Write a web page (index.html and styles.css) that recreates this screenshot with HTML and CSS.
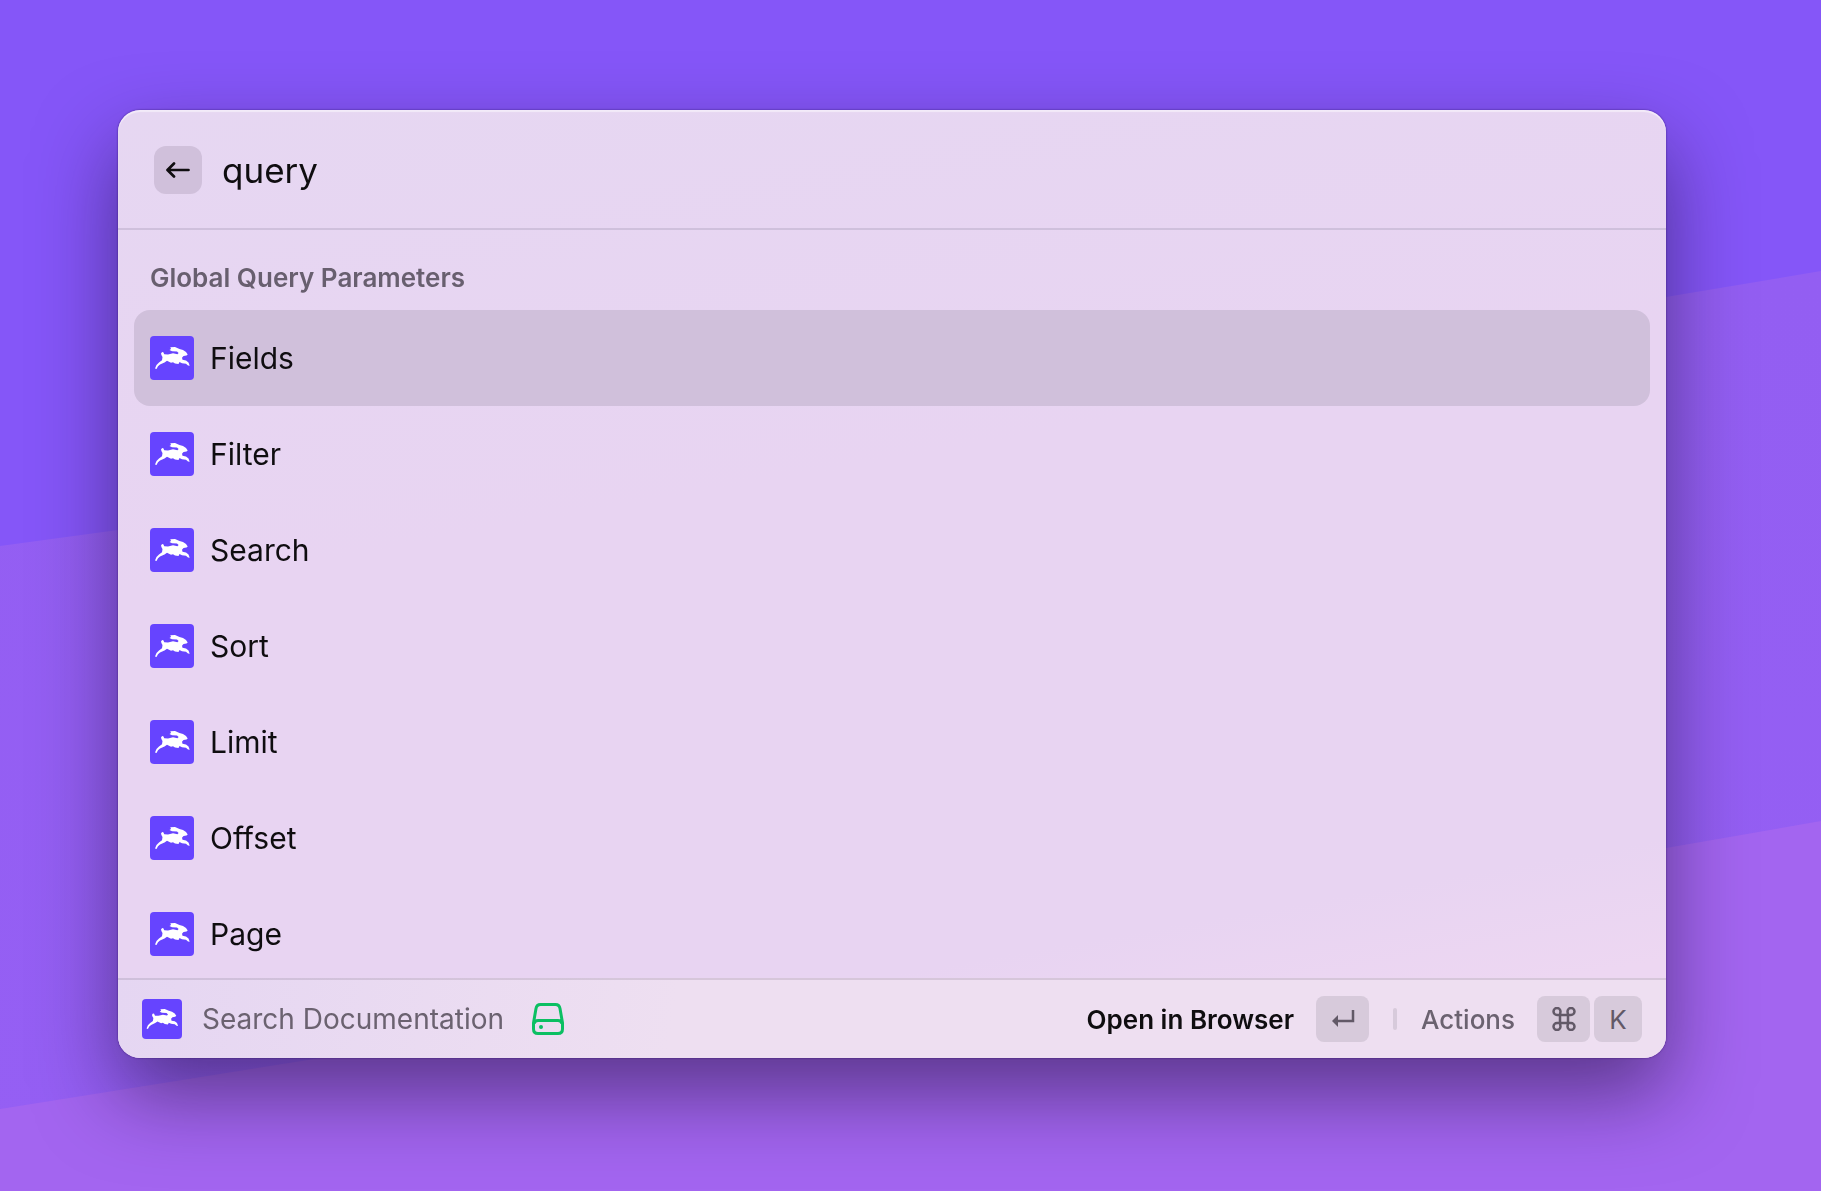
FILE: index.html
```html
<!DOCTYPE html>
<html lang="en">
<head>
<meta charset="utf-8">
<title>Search Documentation</title>
<link rel="stylesheet" href="styles.css">
</head>
<body>
<svg class="wallpaper" viewBox="0 0 1821 1191" preserveAspectRatio="none" aria-hidden="true">
  <defs>
    <linearGradient id="band-mid" x1="0" y1="0" x2="0" y2="1"><stop offset="0" stop-color="#935ef2"/><stop offset="1" stop-color="#955ff4"/></linearGradient>
  </defs>
  <rect width="1821" height="1191" fill="#8556f8"/>
  <path d="M0 546L118 530L1666 297L1821 271V1191H0Z" fill="url(#band-mid)"/>
  <path d="M0 1109L314 1059L1666 848L1821 821V1191H0Z" fill="#a365f0"/>
</svg>
<svg class="sprite" aria-hidden="true">
  <symbol id="rabbit" viewBox="0 0 44 44">
    <path fill="#fff" d="M11 17.500Q12 15.300 13.300 16.300L14.300 18.300L18 18.500L23 17.200L27.500 18.200L28.600 17L27 15.400L22 15.200L19.500 13.900L21 13L20.300 11.300L25 11L29.500 13L33 14L36 16L37.700 18.500L36.500 19.600L33.500 20L32 21.800L32.500 23.800L36 24.500L38.500 26.500L39.700 29.700L38 29.500L36 27.800L32 27.300L29.500 26L28.500 28L25 27.500L23 26.200L21 26.700L17 24.800L14.500 26.500L10 28.500L8 30.300L6.500 33L5 32.500L6.500 29L9 26.500L12 24.300L12.500 21L11.500 19.300Z"/>
  </symbol>
</svg>
<main class="window">
  <header class="search">
    <button class="back" type="button" aria-label="Back">
      <svg width="24" height="16" viewBox="0 0 24 16"><path d="M22.500 8H2M8 1.500L1.500 8L8 14.500" fill="none" stroke="currentColor" stroke-width="2.700" stroke-linecap="round" stroke-linejoin="round"/></svg>
    </button>
    <input class="query" type="text" value="query" aria-label="Search">
  </header>
  <section class="results">
    <h2 class="heading">Global Query Parameters</h2>
    <ul class="list">
      <li class="row selected"><svg class="logo"><use href="#rabbit"/></svg>Fields</li>
      <li class="row"><svg class="logo"><use href="#rabbit"/></svg>Filter</li>
      <li class="row"><svg class="logo"><use href="#rabbit"/></svg>Search</li>
      <li class="row"><svg class="logo"><use href="#rabbit"/></svg>Sort</li>
      <li class="row"><svg class="logo"><use href="#rabbit"/></svg>Limit</li>
      <li class="row"><svg class="logo"><use href="#rabbit"/></svg>Offset</li>
      <li class="row"><svg class="logo"><use href="#rabbit"/></svg>Page</li>
    </ul>
  </section>
  <footer class="bar">
    <svg class="logo small" viewBox="0 0 40 40"><use href="#rabbit" width="40" height="40"/></svg>
    <span class="command">Search Documentation</span>
    <svg class="drive" width="32" height="32" viewBox="0 0 32 32" fill="none" stroke="#0bbf62" stroke-width="3"><path d="M1.500 20L4 5.500Q4.700 1.500 8.500 1.500h15Q27.300 1.500 28 5.500L30.500 20v6q0 4.500-4.500 4.500H6q-4.500 0-4.500-4.500zM2 20.500q1-3 4-3h20q3 0 4 3"/><circle cx="9" cy="24" r="2" fill="#0bbf62" stroke="none"/></svg>
    <button class="action primary" type="button">Open in Browser
      <kbd class="key"><svg width="24" height="20" viewBox="0 0 24 20"><path d="M22 1v11H6" fill="none" stroke="currentColor" stroke-width="2.500"/><path d="M7 6v12L1 12z" fill="currentColor"/></svg></kbd>
    </button>
    <span class="divider"></span>
    <button class="action" type="button">Actions
      <span class="keys"><kbd class="key"><svg width="24" height="24" viewBox="0 0 24 24" fill="none" stroke="currentColor" stroke-width="2.500"><path d="M8 8h8v8H8zM8 8H5a3.500 3.500 0 1 1 3.500-3.500zM16 8h3a3.500 3.500 0 1 0-3.500-3.500zM8 16H5a3.500 3.500 0 1 0 3.500 3.500zM16 16h3a3.500 3.500 0 1 1-3.500 3.500z"/></svg></kbd><kbd class="key letter">K</kbd></span>
    </button>
  </footer>
</main>
</body>
</html>
```
FILE: styles.css
```css
* { box-sizing: border-box; }

body {
  margin: 0;
  min-height: 100vh;
  padding: 110px 155px 133px 118px;
  background: #8556f7;
  color: #0f0d10;
  font-family: Inter, "Liberation Sans", sans-serif;
  font-optical-sizing: none;
}

button, input { font: inherit; font-optical-sizing: none; color: inherit; border: 0; background: none; padding: 0; }

.wallpaper { position: fixed; inset: 0; width: 100%; height: 100%; z-index: -1; }
.sprite { position: absolute; width: 0; height: 0; }

.window {
  overflow: hidden;
  border-radius: 22px;
  background: linear-gradient(170deg, #e6d7f2 0%, #e8d4f2 40%, #e8d4f2 82%, #edd7f2 92%);
  box-shadow: inset 0 2px 1px rgba(255, 255, 255, .5), 0 0 2px rgba(30, 0, 70, .7), 0 36px 80px rgba(20, 10, 40, .5);
}

.search {
  display: flex;
  align-items: center;
  gap: 20px;
  height: 120px;
  padding: 2px 36px 0;
  border-bottom: 2px solid #cfc0dc;
}
.back {
  display: grid;
  place-items: center;
  width: 48px;
  height: 48px;
  border-radius: 12px;
  background: #d0c0db;
}
.query { flex: 1; min-width: 0; font-size: 35px; outline: 0; }

.results { padding: 32px 16px 0; overflow: hidden; }
.heading {
  margin: 0 0 16px;
  padding: 0 16px;
  font-size: 26px;
  line-height: 32px;
  font-weight: 600;
  color: #685f6f;
}
.list { margin: 0 0 -4px; padding: 0; list-style: none; }
.row {
  display: flex;
  align-items: center;
  gap: 16px;
  height: 96px;
  padding: 0 16px;
  border-radius: 16px;
  font-size: 30px;
}
.selected { background: #d0c0db; }
.logo { flex: none; width: 44px; height: 44px; border-radius: 4px; background: #6644ff; }
.small { width: 40px; height: 40px; }

.bar {
  display: flex;
  align-items: center;
  height: 80px;
  padding: 0 24px;
  border-top: 2px solid rgba(80, 60, 90, .15);
  background: linear-gradient(100deg, #e5d6f2, #eedff1 36%);
}
.command { margin-left: 20px; font-size: 28px; color: #6b6270; }
.drive { margin: 0 auto 0 28px; }
.action { display: flex; align-items: center; gap: 22px; font-size: 26px; font-weight: 500; color: #6b6270; }
.primary { font-weight: 600; color: #0f0d10; }
.divider { width: 4px; height: 22px; margin: 0 24px; border-radius: 2px; background: #d7cadb; }
.keys { display: flex; gap: 4px; }
.key {
  display: grid;
  place-items: center;
  width: 53px;
  height: 46px;
  border-radius: 8px;
  background: #d7cadb;
  color: #625967;
  font: 400 26px Inter, sans-serif;
  font-optical-sizing: none;
}
.letter { width: 48px; }
```
